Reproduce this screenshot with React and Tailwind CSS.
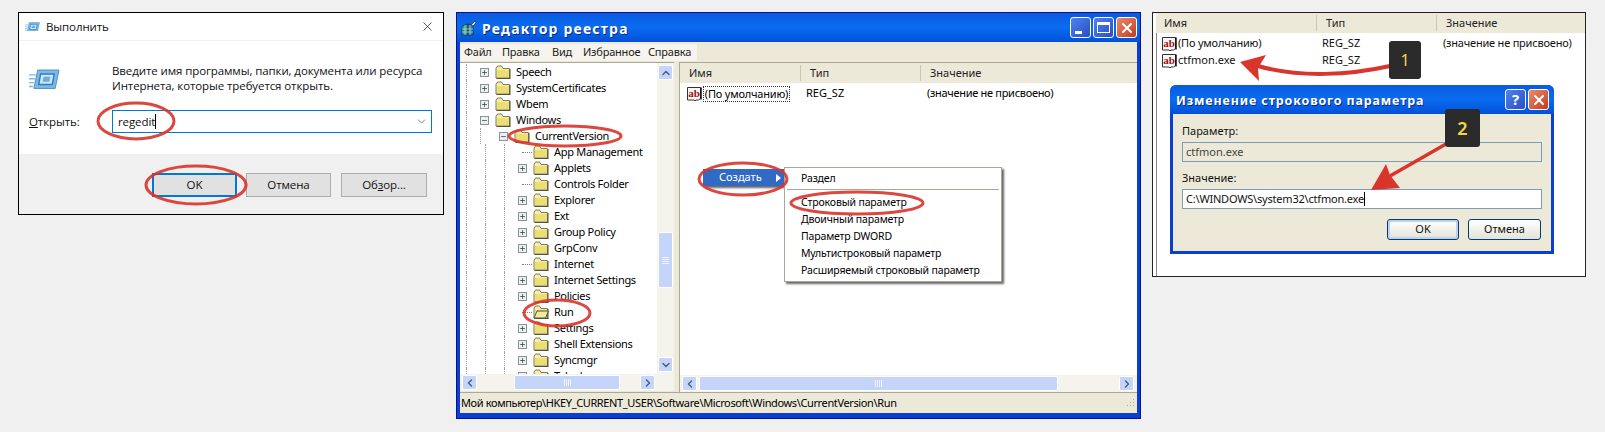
import { ChevronDown, ChevronLeft, ChevronRight, ChevronUp, Minus, Plus, X } from 'lucide-react'

const TREE = [
  { name: 'Speech', depth: 1, box: 'plus' },
  { name: 'SystemCertificates', depth: 1, box: 'plus' },
  { name: 'Wbem', depth: 1, box: 'plus' },
  { name: 'Windows', depth: 1, box: 'minus' },
  { name: 'CurrentVersion', depth: 2, box: 'minus' },
  { name: 'App Management', depth: 3 },
  { name: 'Applets', depth: 3, box: 'plus' },
  { name: 'Controls Folder', depth: 3 },
  { name: 'Explorer', depth: 3, box: 'plus' },
  { name: 'Ext', depth: 3, box: 'plus' },
  { name: 'Group Policy', depth: 3, box: 'plus' },
  { name: 'GrpConv', depth: 3, box: 'plus' },
  { name: 'Internet', depth: 3 },
  { name: 'Internet Settings', depth: 3, box: 'plus' },
  { name: 'Policies', depth: 3, box: 'plus' },
  { name: 'Run', depth: 3, open: true },
  { name: 'Settings', depth: 3, box: 'plus' },
  { name: 'Shell Extensions', depth: 3, box: 'plus' },
  { name: 'Syncmgr', depth: 3, box: 'plus' },
  { name: 'Telephony', depth: 3, box: 'plus' },
]

const NEW_ITEMS = [
  'Строковый параметр',
  'Двоичный параметр',
  'Параметр DWORD',
  'Мультистроковый параметр',
  'Расширяемый строковый параметр',
]

function RunIcon({ size = 16 }) {
  return (
    <svg width={size} height={size * 0.66} viewBox="0 0 32 21" className="shrink-0">
      <path d="M9 1h22l-4 19H5z" fill="#7db9e6" stroke="#4a90c8" />
      <path d="M12 5h14l-2 11H10z" fill="#cfe6f7" stroke="#2f7fbd" strokeWidth="1.5" />
      <path d="M15 8h7l-1 5h-7z" fill="#6aaedf" />
      <path d="M0 6h7M0 10h6M0 14h5M0 18h4" stroke="#7db9e6" strokeWidth="1.5" />
    </svg>
  )
}

function AbIcon() {
  return (
    <svg width="17" height="16" viewBox="0 0 17 16" className="shrink-0">
      <path d="M1.500 1.500h13v11l-2 1.500h-2.500l-1 1-1-1h-6.500z" fill="#fbf8f4" stroke="#333" />
      <path d="M15 1.500v12" stroke="#111" strokeWidth="1.500" />
      <text x="2.200" y="10.500" fontSize="11" fontWeight="700" fontFamily="Liberation Serif, serif" fill="#9c0f20">ab</text>
    </svg>
  )
}

function Folder({ open }) {
  return (
    <svg width="16" height="14" viewBox="0 0 16 14" className="shrink-0">
      <path d="M1 3.500l1.500-2.500h4l1.500 2.500h6.500v9.500H1z" fill="#f6eea8" stroke="#7e7b58" />
      <path d="M2 5h12v7H2z" fill="#ebdf74" />
      <path d="M15 4v9.500M1.500 13.500h14" stroke="#55533a" />
      {open && <path d="M1 13l3-7h11.500l-3 7z" fill="#f3eaa0" stroke="#55533a" />}
    </svg>
  )
}

function TreeBox({ type }) {
  return (
    <span className="flex h-[9px] w-[9px] shrink-0 items-center justify-center border border-[#7f95a0] bg-[#eeeeea]">
      {type === 'plus' ? (
        <Plus size={7} strokeWidth={2} color="#111" />
      ) : (
        <Minus size={7} strokeWidth={2} color="#111" />
      )}
    </span>
  )
}

function TreeRow({ item }) {
  return (
    <div className="flex h-4 items-center">
      <span className="h-4 w-[6px] shrink-0" />
      <span className="h-4 w-[14px] shrink-0 border-l border-dotted border-[#a0a0a0]" />
      {item.depth > 2 && <span className="h-4 w-[5px] shrink-0" />}
      {item.depth > 1 && <span className="h-4 w-[19px] shrink-0 border-l border-dotted border-[#a0a0a0]" />}
      {item.depth > 2 && <span className="h-4 w-[14px] shrink-0 border-l border-dotted border-[#a0a0a0]" />}
      <span className="flex w-[15px] shrink-0 items-center">
        {item.box ? <TreeBox type={item.box} /> : <span className="ml-[4px] w-[10px] border-t border-dotted border-[#808080]" />}
      </span>
      <Folder open={item.open} />
      <span className="ml-[5px] whitespace-nowrap tracking-[-0.3px] text-black">{item.name}</span>
    </div>
  )
}

function ScrollButton({ icon: Icon }) {
  return (
    <span className="flex h-[15px] w-[15px] shrink-0 items-center justify-center rounded-[2px] border border-white bg-[#c5d5f9]">
      <Icon size={12} strokeWidth={3} color="#4d6185" />
    </span>
  )
}

function ThumbLines({ vertical }) {
  return vertical ? (
    <span className="flex w-[7px] flex-col gap-[1px]">
      <span className="h-px bg-[#eef3fe]" />
      <span className="h-px bg-[#eef3fe]" />
      <span className="h-px bg-[#eef3fe]" />
      <span className="h-px bg-[#eef3fe]" />
    </span>
  ) : (
    <span className="flex h-[7px] gap-[1px]">
      <span className="w-px bg-[#eef3fe]" />
      <span className="w-px bg-[#eef3fe]" />
      <span className="w-px bg-[#eef3fe]" />
      <span className="w-px bg-[#eef3fe]" />
    </span>
  )
}

function XpButton({ className, children }) {
  return (
    <span className={`flex h-[21px] w-[21px] shrink-0 items-center justify-center rounded-[3px] border border-white ${className}`}>
      {children}
    </span>
  )
}

function ColumnHeader({ children, className }) {
  return <div className={`flex items-center bg-[#ece9d8] text-[#222] ${className}`}>{children}</div>
}

function RunDialog() {
  return (
    <div className="flex h-[203px] w-[426px] shrink-0 flex-col border border-black bg-white font-['Open_Sans',sans-serif] text-[11.5px] tracking-[-0.1px] text-[#111]">
      <div className="flex h-[28px] items-center border-b border-[#f0f0f0] pl-[6px] pr-[8px]">
        <RunIcon size={15} />
        <span className="ml-[6px]">Выполнить</span>
        <X size={15} strokeWidth={1.2} className="ml-auto" color="#222" />
      </div>
      <div className="flex h-[113px] flex-col pl-[9px] pt-[22px]">
        <div className="flex">
          <span className="ml-[1px] mt-[6px] w-[83px] shrink-0">
            <RunIcon size={31} />
          </span>
          <p className="whitespace-nowrap leading-[15px]">
            Введите имя программы, папки, документа или ресурса
            <br />
            Интернета, которые требуется открыть.
          </p>
        </div>
        <div className="mt-[17px] flex items-center">
          <span className="ml-[1px] w-[83px] shrink-0">
            <u>О</u>ткрыть:
          </span>
          <div className="flex h-[23px] w-[320px] items-center border border-[#0078d7] pl-[5px] pr-[3px]">
            regedit
            <span className="h-[15px] w-px bg-black" />
            <ChevronDown size={13} strokeWidth={1.2} className="ml-auto" color="#444" />
          </div>
        </div>
      </div>
      <div className="flex flex-1 items-start justify-end gap-[9px] bg-[#f0f0f0] pr-[16px] pt-[19px]">
        <button type="button" className="h-[24px] w-[85px] border-2 border-[#0078d7] bg-[#e1e1e1]">OK</button>
        <button type="button" className="h-[24px] w-[85px] border border-[#adadad] bg-[#e1e1e1]">Отмена</button>
        <button type="button" className="ml-[1px] h-[24px] w-[86px] border border-[#adadad] bg-[#e1e1e1]">
          Об<u>з</u>ор...
        </button>
      </div>
    </div>
  )
}

function RegeditWindow() {
  return (
    <div className="ml-[12px] flex h-[407px] w-[685px] shrink-0 flex-col border border-[#00138c] bg-[#0a3fd6] pb-[5px] text-[11px]">
      <div className="flex h-[29px] shrink-0 items-center bg-gradient-to-b from-[#0a5be0] via-[#0a6cf0] to-[#0350d8] pl-[4px] pr-[3px]">
        <svg width="16" height="16" viewBox="0 0 16 16" className="shrink-0">
          <path d="M1 6l6-2v11H1z" fill="#3a9a8a" stroke="#123" strokeWidth=".6" />
          <path d="M7 4l5 1v10H7z" fill="#2e7f9a" stroke="#123" strokeWidth=".6" />
          <path d="M1 9h11M1 12h11M4 5v10M9 5v10" stroke="#dff" strokeWidth=".5" />
          <path d="M10 5l4-4 1 2-3 3z" fill="#cde" stroke="#123" strokeWidth=".6" />
        </svg>
        <span className="ml-[5px] mt-[2px] text-[14px] font-bold tracking-[1.2px] text-white [text-shadow:1px_1px_0_#0a2a80]">Редактор реестра</span>
        <div className="ml-auto flex gap-[2px]">
          <XpButton className="bg-gradient-to-br from-[#4f82ee] to-[#2a4fc4]">
            <span className="mt-[9px] mr-[4px] h-[3px] w-[7px] bg-white" />
          </XpButton>
          <XpButton className="bg-gradient-to-br from-[#4f82ee] to-[#2a4fc4]">
            <span className="h-[11px] w-[13px] border border-t-[3px] border-white" />
          </XpButton>
          <XpButton className="bg-gradient-to-br from-[#e98a6c] to-[#c23a1c]">
            <X size={16} strokeWidth={3} color="#fff" />
          </XpButton>
        </div>
      </div>
      <div className="mx-[3px] flex min-h-0 flex-1 flex-col bg-[#ece9d8]">
        <div className="flex h-[20px] shrink-0 items-center">
          <div className="flex h-[17px] w-[237px] items-center bg-[#f6f4ec] pl-[4px] tracking-[-0.2px] text-[#222]">
            <span className="w-[38px]">Файл</span>
            <span className="w-[50px]">Правка</span>
            <span className="w-[31px]">Вид</span>
            <span className="w-[65px]">Избранное</span>
            <span className="w-[49px]">Справка</span>
          </div>
        </div>
        <div className="flex h-[330px] shrink-0 gap-[5px]">
          <div className="flex w-[214px] shrink-0 flex-col border-t border-[#aca899]">
            <div className="flex h-[311px] shrink-0">
              <div className="w-[197px] shrink-0 overflow-hidden bg-white pt-[1px]">
                {TREE.map((item) => (
                  <TreeRow key={item.name} item={item} />
                ))}
              </div>
              <div className="flex w-[17px] shrink-0 flex-col items-center bg-[#f4f3ec] pt-[2px]">
                <ScrollButton icon={ChevronUp} />
                <div className="h-[152px] shrink-0" />
                <div className="flex h-[56px] w-[15px] shrink-0 items-center justify-center rounded-[2px] border border-white bg-[#c5d5f9]">
                  <ThumbLines vertical />
                </div>
                <div className="h-[69px] shrink-0" />
                <ScrollButton icon={ChevronDown} />
              </div>
            </div>
            <div className="flex h-[17px] shrink-0 items-center bg-[#f4f3ec] pl-[2px]">
              <ScrollButton icon={ChevronLeft} />
              <div className="w-[37px]" />
              <div className="flex h-[15px] w-[106px] items-center justify-center rounded-[2px] border border-white bg-[#c5d5f9]">
                <ThumbLines />
              </div>
              <div className="w-[20px]" />
              <ScrollButton icon={ChevronRight} />
            </div>
          </div>
          <div className="flex min-w-0 flex-1 flex-col border-t border-l border-[#aca899] bg-white">
            <ColumnHeader className="h-[20px] shrink-0">
              <span className="w-[120px] pl-[9px]">Имя</span>
              <span className="w-[120px] border-l border-[#c9c6b4] pl-[9px]">Тип</span>
              <span className="border-l border-[#c9c6b4] pl-[9px]">Значение</span>
            </ColumnHeader>
            <div className="flex h-[20px] items-center pl-[6px] pt-[1px]">
              <AbIcon />
              <span className="w-[87px] shrink-0 whitespace-nowrap border border-dotted border-[#333] text-center leading-[14px] tracking-[-0.2px]">(По умолчанию)</span>
              <span className="ml-[16px] w-[121px] shrink-0">REG_SZ</span>
              <span className="tracking-[-0.3px]">(значение не присвоено)</span>
            </div>
            <div className="flex-1" />
            <div className="flex h-[17px] shrink-0 items-center bg-[#f4f3ec] pl-[2px]">
              <ScrollButton icon={ChevronLeft} />
              <div className="w-[2px]" />
              <div className="flex h-[15px] w-[359px] items-center justify-center rounded-[2px] border border-white bg-[#c5d5f9]">
                <ThumbLines />
              </div>
              <div className="w-[61px]" />
              <ScrollButton icon={ChevronRight} />
            </div>
          </div>
        </div>
        <div className="flex h-[21px] shrink-0 items-center border-t border-[#aca899] pl-[1px] pr-[2px] tracking-[-0.37px] text-black">
          Мой компьютер\HKEY_CURRENT_USER\Software\Microsoft\Windows\CurrentVersion\Run
          <svg width="11" height="11" viewBox="0 0 11 11" className="ml-auto">
            <path d="M9 1h1v1H9zM6 4h1v1H6zM9 4h1v1H9zM3 7h1v1H3zM6 7h1v1H6zM9 7h1v1H9z" fill="#aca899" />
          </svg>
        </div>
      </div>
    </div>
  )
}

function ContextMenus() {
  return (
    <>
      <div className="absolute left-[703px] top-[169px] flex h-[17px] w-[81px] items-center bg-[#316ac5] pl-[16px] text-[11px] text-white shadow-[2px_2px_2px_#666]">
        Создать
        <svg width="5" height="8" viewBox="0 0 5 8" className="ml-auto mr-[3px]">
          <path d="M0 0l5 4-5 4z" fill="#fff" />
        </svg>
      </div>
      <div className="absolute left-[784px] top-[167px] h-[115px] w-[218px] border border-[#aca899] bg-white text-[10.5px] tracking-[-0.15px] text-black shadow-[2px_2px_2px_#666]">
        <div className="flex h-[21px] items-center pl-[16px]">Раздел</div>
        <div className="mx-[2px] border-t border-[#aca899]" />
        <div className="pt-[4px]">
          {NEW_ITEMS.map((label) => (
            <div key={label} className="flex h-[17px] items-center whitespace-nowrap pl-[16px]">
              {label}
            </div>
          ))}
        </div>
      </div>
    </>
  )
}

function StringEditor() {
  return (
    <div className="ml-[11px] flex h-[265px] w-[434px] shrink-0 flex-col border border-[#222] bg-white text-[11px] text-[#111]">
      <ColumnHeader className="ml-[3px] h-[20px] shrink-0">
        <span className="w-[160px] pl-[8px]">Имя</span>
        <span className="w-[120px] border-l border-[#c9c6b4] pl-[9px]">Тип</span>
        <span className="border-l border-[#c9c6b4] pl-[9px]">Значение</span>
      </ColumnHeader>
      <div className="ml-[3px] flex flex-1 flex-col border-l border-[#888] pt-[2px]">
        <div className="flex h-[17px] items-center pl-[4px]">
          <AbIcon />
          <span className="w-[144px] shrink-0 tracking-[-0.2px]">(По умолчанию)</span>
          <span className="w-[121px] shrink-0">REG_SZ</span>
          <span className="tracking-[-0.2px]">(значение не присвоено)</span>
        </div>
        <div className="flex h-[17px] items-center pl-[4px]">
          <AbIcon />
          <span className="w-[144px] shrink-0">ctfmon.exe</span>
          <span>REG_SZ</span>
        </div>
        <div className="ml-[13px] mt-[16px] flex h-[169px] w-[384px] flex-col rounded-t-[6px] bg-[#0a3fd6] px-[3px] pb-[3px]">
          <div className="-mx-[3px] flex h-[29px] shrink-0 items-center rounded-t-[6px] bg-gradient-to-b from-[#0a5be0] via-[#0a6cf0] to-[#0350d8] pl-[6px] pr-[5px]">
            <span className="mt-[3px] text-[12.5px] font-bold tracking-[0.85px] text-white [text-shadow:1px_1px_0_#0a2a80]">Изменение строкового параметра</span>
            <div className="ml-auto flex gap-[2px]">
              <XpButton className="bg-gradient-to-br from-[#4f82ee] to-[#2a4fc4]">
                <span className="text-[15px] font-bold text-white">?</span>
              </XpButton>
              <XpButton className="bg-gradient-to-br from-[#e98a6c] to-[#c23a1c]">
                <X size={16} strokeWidth={3} color="#fff" />
              </XpButton>
            </div>
          </div>
          <div className="flex-1 bg-[#ece9d8] pl-[9px] pt-[10px]">
            <div className="h-[14px] leading-[14px]">Параметр:</div>
            <div className="mt-[4px] flex h-[20px] w-[360px] items-center border border-[#7f9db9] pl-[3px] text-[#444]">ctfmon.exe</div>
            <div className="mt-[9px] h-[14px] leading-[14px]">Значение:</div>
            <div className="mt-[4px] flex h-[20px] w-[360px] items-center border border-[#7f9db9] bg-white pl-[3px] tracking-[-0.2px]">
              C:\WINDOWS\system32\ctfmon.exe
              <span className="h-[14px] w-px bg-black" />
            </div>
            <div className="mt-[10px] flex w-[359px] justify-end gap-[9px]">
              <button type="button" className="h-[21px] w-[72px] rounded-[3px] border border-[#003c74] bg-gradient-to-b from-white to-[#e3e3da] shadow-[inset_0_0_0_2px_#bcd2ee]">OK</button>
              <button type="button" className="h-[21px] w-[73px] rounded-[3px] border border-[#003c74] bg-gradient-to-b from-white to-[#e3e3da]">Отмена</button>
            </div>
          </div>
        </div>
      </div>
    </div>
  )
}

function Annotations() {
  const red = '#d9352c'
  return (
    <>
      <svg width="1605" height="432" viewBox="0 0 1605 432" className="pointer-events-none absolute left-0 top-0">
        <g fill="none" stroke={red} strokeWidth="3" opacity="0.9">
          <ellipse cx="136" cy="121" rx="38" ry="18" />
          <ellipse cx="196" cy="185" rx="50" ry="19" />
          <ellipse cx="565" cy="136" rx="56" ry="10" />
          <ellipse cx="743" cy="179" rx="44" ry="16" />
          <ellipse cx="857" cy="203" rx="66" ry="11" />
          <ellipse cx="557" cy="313" rx="33" ry="13" />
        </g>
        <path d="M1390 66C1350 75 1300 78 1258 66" fill="none" stroke={red} strokeWidth="4" />
        <path d="M1240 62L1266 55L1258 68L1259 81z" fill={red} />
        <path d="M1446 144L1390 176" fill="none" stroke={red} strokeWidth="3.500" />
        <path d="M1371 190L1386 164L1390 175L1400 188z" fill={red} />
      </svg>
      <div className="absolute left-[1389px] top-[41px] flex h-[38px] w-[32px] items-center justify-center rounded-[3px] bg-[#2b2b2b] text-[16px] text-[#f5d547]">1</div>
      <div className="absolute left-[1445px] top-[109px] flex h-[38px] w-[35px] items-center justify-center rounded-[3px] bg-[#2b2b2b] text-[18px] font-semibold text-[#f5d547]">2</div>
    </>
  )
}

export default function App() {
  return (
    <div className="relative flex h-[432px] w-[1605px] items-start overflow-hidden bg-[#f0f0f0] pl-[18px] pt-[12px] font-['Noto_Sans',sans-serif]">
      <RunDialog />
      <RegeditWindow />
      <StringEditor />
      <ContextMenus />
      <Annotations />
    </div>
  )
}
